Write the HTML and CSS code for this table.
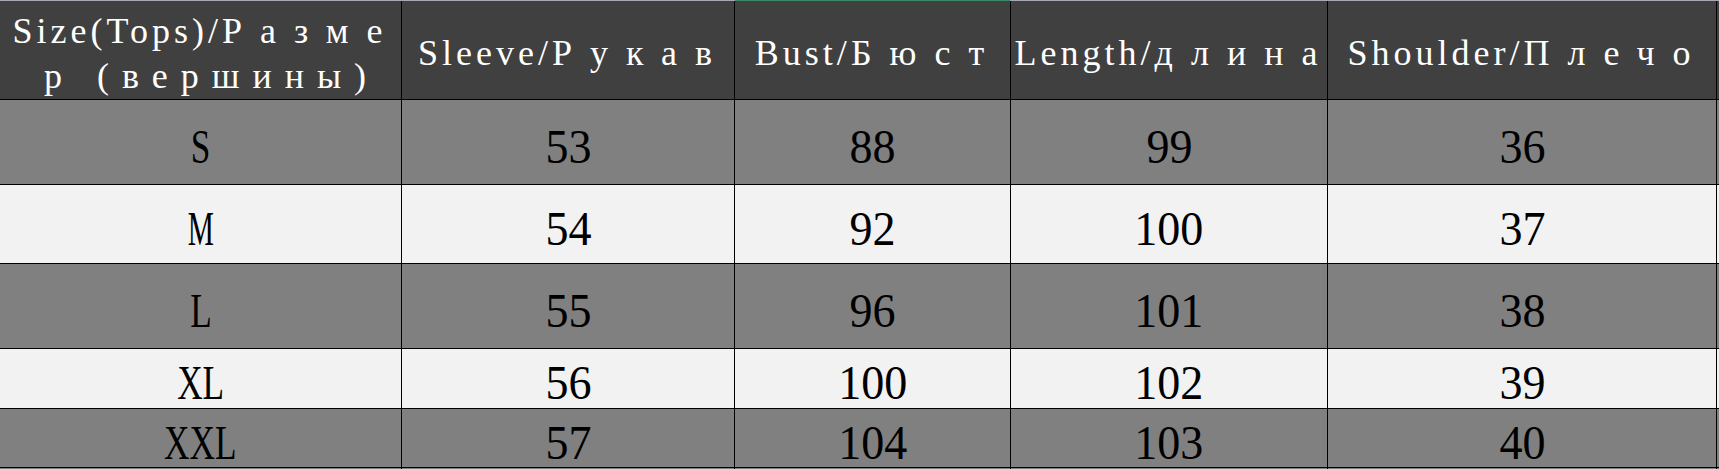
FILE: index.html
```html
<!DOCTYPE html>
<html>
<head>
<meta charset="utf-8">
<link rel="stylesheet" href="styles.css">
</head>
<body>
<div class="page">
  <div class="topline">
    <div class="tl tl-a"></div>
    <div class="tl tl-g"></div>
    <div class="tl tl-b"></div>
  </div>
  <div class="sheet">
    <div class="c h h-two">
      <div class="hl"><span class="lat lat-wide">Size(Tops)/</span><span class="cyr">Разме</span></div>
      <div class="hl hl-2"><span class="cyr cyr-tight">р (вершины)</span></div>
    </div>
    <div class="c h"><div class="hl"><span class="lat">Sleeve/</span><span class="cyr">Рукав</span></div></div>
    <div class="c h"><div class="hl"><span class="lat">Bust/</span><span class="cyr">Бюст</span></div></div>
    <div class="c h"><div class="hl"><span class="lat">Length/</span><span class="cyr">длина</span></div></div>
    <div class="c h"><div class="hl"><span class="lat">Shoulder/</span><span class="cyr">Плечо</span></div></div>
    <div class="c h"></div>

    <div class="c d g"><span class="sz">S</span></div>
    <div class="c d g"><span class="num">53</span></div>
    <div class="c d g"><span class="num">88</span></div>
    <div class="c d g"><span class="num">99</span></div>
    <div class="c d g"><span class="num">36</span></div>
    <div class="c g"></div>

    <div class="c d w"><span class="sz sz-m">M</span></div>
    <div class="c d w"><span class="num">54</span></div>
    <div class="c d w"><span class="num">92</span></div>
    <div class="c d w"><span class="num">100</span></div>
    <div class="c d w"><span class="num">37</span></div>
    <div class="c w"></div>

    <div class="c d g"><span class="sz">L</span></div>
    <div class="c d g"><span class="num">55</span></div>
    <div class="c d g"><span class="num">96</span></div>
    <div class="c d g"><span class="num">101</span></div>
    <div class="c d g"><span class="num">38</span></div>
    <div class="c g"></div>

    <div class="c d w"><span class="sz">XL</span></div>
    <div class="c d w"><span class="num">56</span></div>
    <div class="c d w"><span class="num">100</span></div>
    <div class="c d w"><span class="num">102</span></div>
    <div class="c d w"><span class="num">39</span></div>
    <div class="c w"></div>

    <div class="c d g"><span class="sz">XXL</span></div>
    <div class="c d g"><span class="num">57</span></div>
    <div class="c d g"><span class="num">104</span></div>
    <div class="c d g"><span class="num">103</span></div>
    <div class="c d g"><span class="num">40</span></div>
    <div class="c g"></div>

    <div class="c g"></div>
    <div class="c g"></div>
    <div class="c g"></div>
    <div class="c g"></div>
    <div class="c g"></div>
    <div class="c g"></div>
  </div>
</div>
</body>
</html>
```

FILE: styles.css
```css
html, body {
  margin: 0;
  padding: 0;
  background: #000;
}

.page {
  width: 1719px;
  height: 469px;
  overflow: hidden;
  font-family: "Liberation Serif", "DejaVu Serif", serif;
}

.topline {
  display: flex;
  height: 1px;
}

.tl { height: 1px; }
.tl-a { width: 735px; background: #a9a6b6; }
.tl-g { width: 275px; background: #3c8a68; }
.tl-b { flex: 1; background: #a9a6b6; }

.sheet {
  display: grid;
  grid-template-columns: 401px 332px 275px 316px 388px 2px;
  grid-template-rows: 98px 84px 78px 84px 59px 58px 1px;
  gap: 1px;
  background: #000;
}

.c {
  display: flex;
  align-items: center;
  justify-content: center;
  min-width: 0;
}

.h {
  background: #404040;
  color: #ffffff;
  font-size: 36px;
  line-height: 45px;
  flex-direction: column;
  padding-top: 6px;
  box-sizing: border-box;
  white-space: nowrap;
}

.h-two {
  justify-content: flex-start;
  padding-top: 8px;
}

.hl {
  display: block;
  text-align: center;
  padding-left: 12px;
}

.hl-2 {
  padding-left: 22px;
}

.lat { letter-spacing: 4px; }
.lat-wide { letter-spacing: 4px; }

.cyr {
  letter-spacing: 18px;
}

.cyr-tight {
  letter-spacing: 13px;
}

.g { background: #808080; }
.w { background: #f2f2f2; }

.d {
  color: #000;
  font-size: 49px;
  line-height: 56px;
  padding-top: 9px;
  box-sizing: border-box;
}

.num {
  display: inline-block;
  transform: scaleX(0.94);
}

.sz {
  display: inline-block;
  transform: scaleX(0.72);
}

.sz-m {
  transform: scaleX(0.6);
}
```
